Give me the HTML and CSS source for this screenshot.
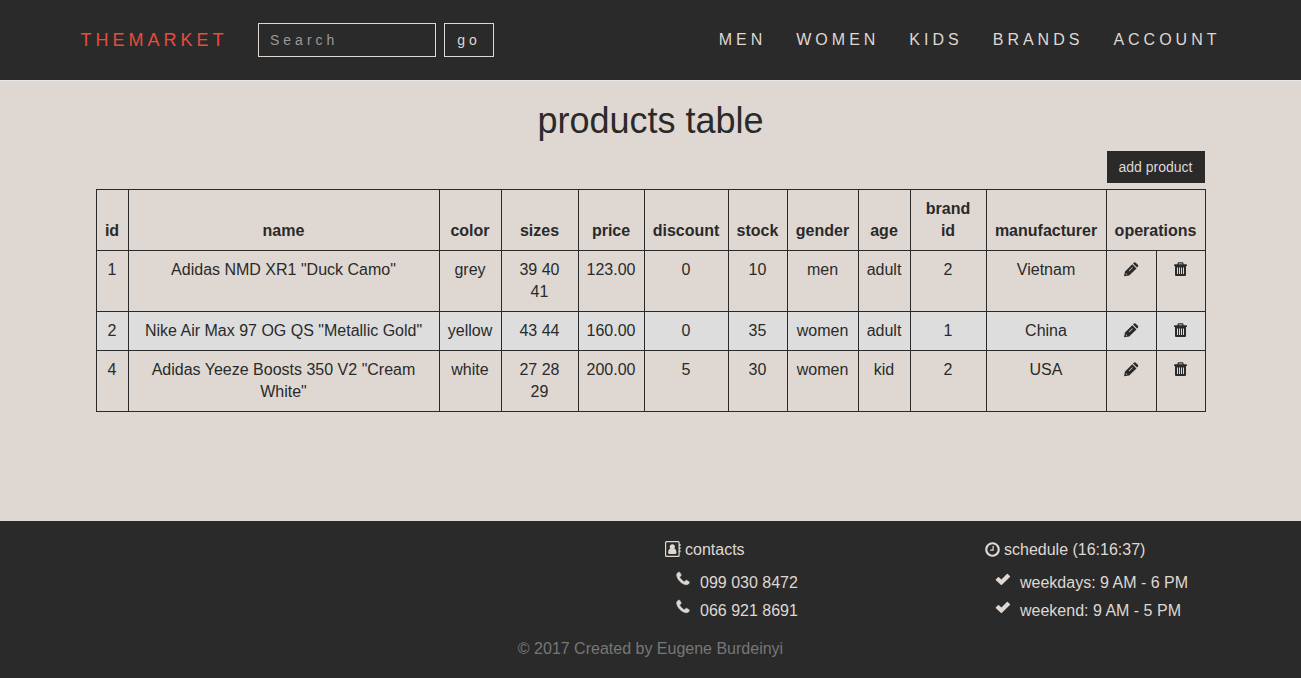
FILE: index.html
```html
<!DOCTYPE html>
<html lang="en">
<head>
<meta charset="utf-8">
<title>products table</title>
<link rel="stylesheet" href="styles.css">
</head>
<body>
<svg class="sprite" aria-hidden="true">
  <symbol id="pencil" viewBox="0 0 15 15"><path d="M0 14.200L1 9.500 8.300 2.200l4.200 4.200L5.200 13.500zM9 1.500l.8-.8q1-.9 2 0l2 2q.9 1 0 2l-.8.900z"/><path class="cut" d="M2 11.200l1.300 1.300-1 .3-.5-.5zM4.800 8.700l3.500-3.500.5.5-3.500 3.500z"/></symbol>
  <symbol id="trash" viewBox="0 0 15 15"><path fill-rule="evenodd" d="M1 3.200q0-1 1-1h2.500V1.600Q4.500.3 5.700.3h3.600q1.200 0 1.200 1.300v.6H13q1 0 1 1V4H1zM5.700 2.200h3.600v-.8H5.700zM2 4h11v9q0 1-1 1H3q-1 0-1-1zM4 5.500V12h1V5.500zm2 0V12h1V5.500zm2 0V12h1V5.500zm2 0V12h1V5.500z"/></symbol>
  <symbol id="book" viewBox="0 0 16 16"><path fill-rule="evenodd" d="M1.500 0h11.700q1.500 0 1.500 1.500V3h.9v1.800h-.9v1.400h.9V8h-.9v1.400h.9v1.800h-.9v3.300q0 1.500-1.500 1.500H1.500Q0 16 0 14.500v-13Q0 0 1.500 0zM1.700 1.200q-.5 0-.5.500v12.600q0 .5.500.5H13q.5 0 .5-.5V1.700q0-.5-.5-.5z"/><circle cx="7.300" cy="5.800" r="2.600"/><path d="M5 7.500q2.300 1.500 4.600 0 1.900.8 1.900 4 0 1.400-1.200 1.400h-6q-1.200 0-1.200-1.400 0-3.200 1.900-4z"/></symbol>
  <symbol id="phone" viewBox="0 0 1792 1792"><path class="bold" d="M1600 1240q0 27-10 70.500t-21 68.500q-21 50-122 106-94 51-186 51-27 0-53-3.500t-57.500-12.500-47-14.500-55.500-20.500-49-18q-98-35-175-83-127-79-264-216t-216-264q-48-77-83-175-3-9-18-49t-20.500-55.500-14.500-47-12.500-57.500-3.500-53q0-92 51-186 56-101 106-122 25-11 68.500-21t70.500-10q14 0 21 3 18 6 53 76 11 19 30 54t35 63.500 31 53.500q3 4 17.500 25t21.500 35.500 7 28.500q0 20-28.500 50t-62 55-62 53-28.500 46q0 9 5 22.500t8.500 20.500 14 24 11.500 19q76 137 174 235t235 174q2 1 19 11.500t24 14 20.500 8.500 22.500 5q18 0 46-28.500t53-62 55-62 50-28.500q14 0 28.500 7t35.500 21.500 25 17.500q25 15 53.500 31t63.500 35 54 30q70 35 76 53 3 7 3 21z"/></symbol>
  <symbol id="clock" viewBox="0 0 1792 1792"><path d="M1024 544v448q0 14-9 23t-23 9h-320q-14 0-23-9t-9-23v-64q0-14 9-23t23-9h224v-352q0-14 9-23t23-9h64q14 0 23 9t9 23zm416 352q0-148-73-273t-198-198-273-73-273 73-198 198-73 273 73 273 198 198 273 73 273-73 198-198 73-273zm224 0q0 209-103 385.500t-279.500 279.500-385.500 103-385.500-103-279.500-279.500-103-385.500 103-385.500 279.500-279.500 385.500-103 385.500 103 279.500 279.500 103 385.500z"/></symbol>
  <symbol id="check" viewBox="0 0 16 16"><path d="M.9 8.300L3 6.200q.5-.4 1 0L6.400 8.400 11.900 3q.4-.4.900 0L14.900 5q.4.500 0 1L7 13.700q-.6.500-1.200 0L.9 9.200q-.4-.4 0-.9z"/></symbol>
</svg>
<header class="navbar">
  <a class="brand">THEMARKET</a>
  <form class="search"><input class="field" type="text" placeholder="Search"><button class="go" type="button">go</button></form>
  <nav class="menu"><a>MEN</a><a>WOMEN</a><a>KIDS</a><a>BRANDS</a><a>ACCOUNT</a></nav>
</header>
<main class="content">
  <h1 class="title">products table</h1>
  <div class="actions"><button class="add" type="button">add product</button></div>
  <table class="products">
    <colgroup><col class="c-id"><col class="c-name"><col class="c-color"><col class="c-sizes"><col class="c-price"><col class="c-discount"><col class="c-stock"><col class="c-gender"><col class="c-age"><col class="c-brand"><col class="c-maker"><col class="c-edit"><col class="c-delete"></colgroup>
    <thead><tr><th>id</th><th>name</th><th>color</th><th>sizes</th><th>price</th><th>discount</th><th>stock</th><th>gender</th><th>age</th><th>brand id</th><th>manufacturer</th><th colspan="2">operations</th></tr></thead>
    <tbody>
      <tr><td>1</td><td>Adidas NMD XR1 "Duck Camo"</td><td>grey</td><td>39 40 41</td><td>123.00</td><td>0</td><td>10</td><td>men</td><td>adult</td><td>2</td><td>Vietnam</td><td><svg class="op"><use href="#pencil"/></svg></td><td><svg class="op"><use href="#trash"/></svg></td></tr>
      <tr class="even"><td>2</td><td>Nike Air Max 97 OG QS "Metallic Gold"</td><td>yellow</td><td>43 44</td><td>160.00</td><td>0</td><td>35</td><td>women</td><td>adult</td><td>1</td><td>China</td><td><svg class="op"><use href="#pencil"/></svg></td><td><svg class="op"><use href="#trash"/></svg></td></tr>
      <tr><td>4</td><td>Adidas Yeeze Boosts 350 V2 "Cream White"</td><td>white</td><td>27 28 29</td><td>200.00</td><td>5</td><td>30</td><td>women</td><td>kid</td><td>2</td><td>USA</td><td><svg class="op"><use href="#pencil"/></svg></td><td><svg class="op"><use href="#trash"/></svg></td></tr>
    </tbody>
  </table>
</main>
<footer class="footer">
  <div class="columns">
    <section class="info">
      <div class="heading"><svg class="icon"><use href="#book"/></svg>contacts</div>
      <ul class="list"><li><svg class="icon"><use href="#phone"/></svg>099 030 8472</li><li><svg class="icon"><use href="#phone"/></svg>066 921 8691</li></ul>
    </section>
    <section class="info">
      <div class="heading clock"><svg class="icon"><use href="#clock"/></svg>schedule (16:16:37)</div>
      <ul class="list"><li><svg class="icon"><use href="#check"/></svg>weekdays: 9 AM - 6 PM</li><li><svg class="icon"><use href="#check"/></svg>weekend: 9 AM - 5 PM</li></ul>
    </section>
  </div>
  <p class="copyright">© 2017 Created by Eugene Burdeinyi</p>
</footer>
</body>
</html>
```
FILE: styles.css
```css
* { box-sizing: border-box; }
body {
  margin: 0;
  height: 678px;
  display: flex;
  flex-direction: column;
  background: #dfd8d2;
  color: #2a2a2a;
  font: 16px/22px "Liberation Sans", Arial, sans-serif;
}
.sprite { display: none; }
.navbar {
  height: 81px;
  flex: none;
  display: flex;
  align-items: flex-start;
  padding: 0 80.5px 0 80.5px;
  background: #2a2a2a;
  border-bottom: 1px solid #e7e7e7;
  color: #dfd8d2;
}
.brand { width: 177.5px; margin-top: 29px; font-size: 18px; letter-spacing: 4px; color: #e74c3c; }
.search { display: flex; gap: 8px; margin-top: 23px; }
.field, .go {
  height: 34px;
  margin: 0;
  border: 1px solid #dfd8d2;
  background: #2a2a2a;
  color: #dfd8d2;
  font: 14px/20px "Liberation Sans", Arial, sans-serif;
}
.field { width: 178px; padding: 6px 11px; letter-spacing: 4px; }
.field::placeholder { color: #999; opacity: 1; }
.go { width: 50px; padding: 0; letter-spacing: 4px; }
.menu { display: flex; gap: 30px; margin: 29px 0 0 auto; letter-spacing: 4px; }
.content { flex: none; height: 440px; padding: 20px 95px 0 96px; }
.title { margin: 0 1px 0 0; height: 50px; font-size: 36px; font-weight: 400; line-height: 40px; text-align: center; }
.actions { display: flex; justify-content: flex-end; padding-right: 1px; height: 38px; }
.add { width: 98px; height: 32px; border: 0; padding: 0 1px 0 0; background: #2a2a2a; color: #dfd8d2; font: 14px/20px "Liberation Sans", Arial, sans-serif; }
.products { width: 1110px; table-layout: fixed; border-collapse: collapse; text-align: center; }
.products th, .products td { border: 1px solid #2a2a2a; padding: 8px 8px 8px 7px; vertical-align: top; }
.products th { vertical-align: bottom; }
.even { background: #ddd; }
.c-id { width: 32px; }
.c-name { width: 311px; }
.c-color { width: 62px; }
.c-sizes { width: 77px; }
.c-price { width: 66px; }
.c-discount { width: 84px; }
.c-stock { width: 59px; }
.c-gender { width: 71px; }
.c-age { width: 52px; }
.c-brand { width: 76px; }
.c-maker { width: 120px; }
.c-edit { width: 50px; }
.c-delete { width: 49px; }
.op { display: block; width: 15px; height: 15px; margin: 3px auto 0; fill: #2a2a2a; }
.cut { fill: #dfd8d2; }
.bold { stroke: #dfd8d2; stroke-width: 70px; }
.footer { flex: 1; background: #2a2a2a; color: #dfd8d2; padding-top: 18px; }
.columns { display: flex; padding-left: 665px; height: 99px; }
.info { width: 320px; flex: none; }
.info:last-child { width: 316px; }
.icon { width: 16px; height: 16px; flex: none; fill: #dfd8d2; }
.heading { display: flex; align-items: flex-start; gap: 4px; height: 22px; }
.heading .icon { margin-top: 2px; }
.heading.clock { margin-left: -1px; }
.heading.clock .icon { width: 17px; height: 17px; margin-right: -1px; }
.list { list-style: none; margin: 8px 0 0; padding: 0 0 0 10px; }
.list li { display: flex; gap: 9px; height: 28px; line-height: 28px; }
.list .icon { margin-top: 2px; }
.copyright { margin: 0; color: #777; text-align: center; }
```
